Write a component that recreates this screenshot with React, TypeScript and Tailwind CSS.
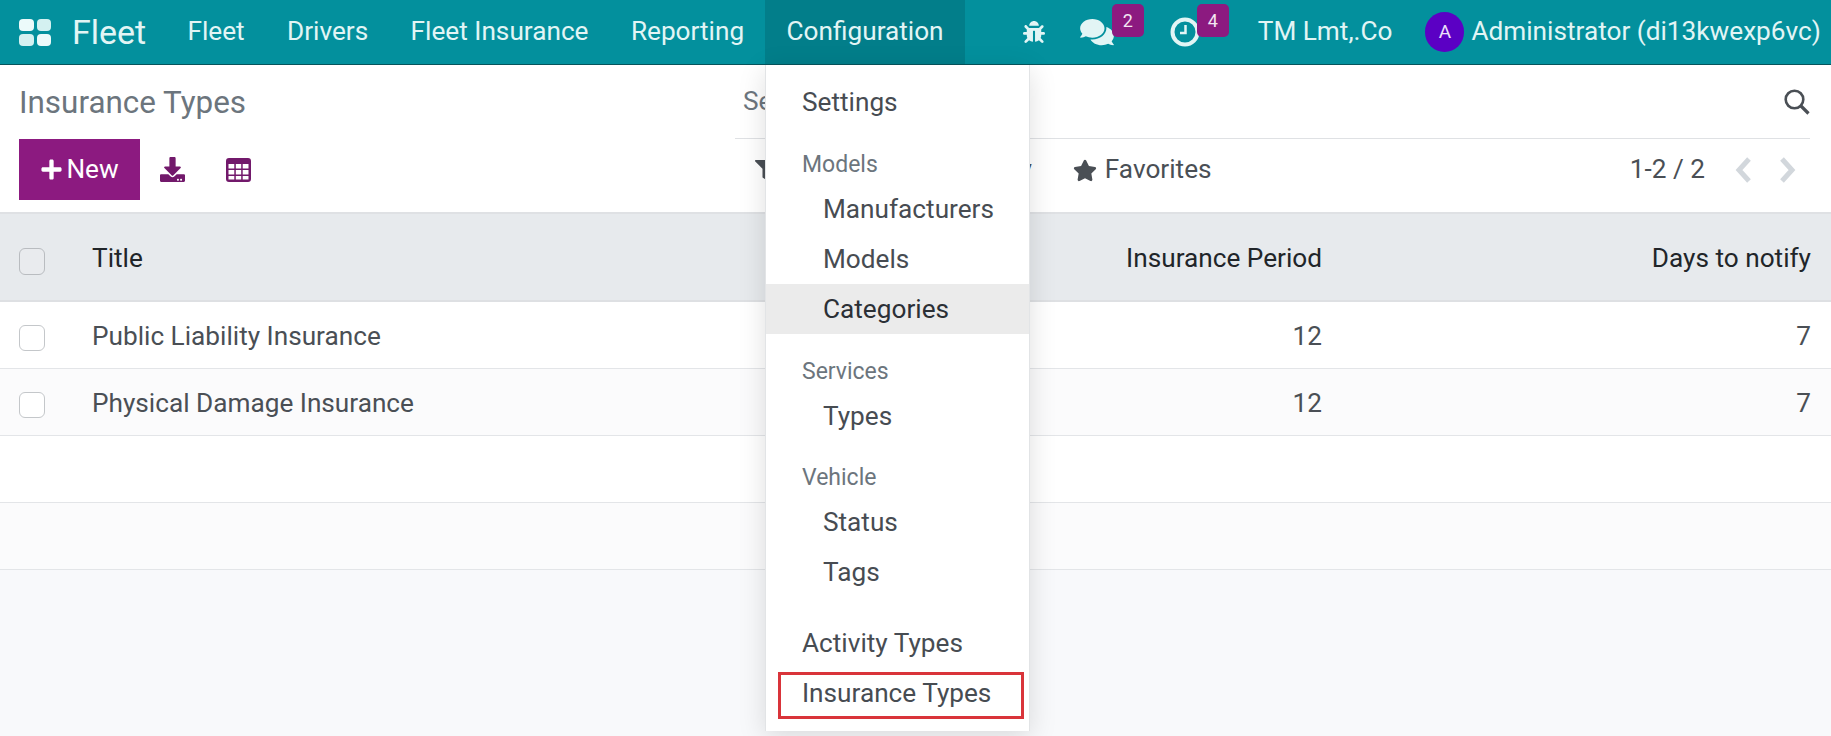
import { FaBug, FaComments, FaDownload, FaFilter, FaPlus, FaStar } from 'react-icons/fa';

const font = { fontFamily: 'Roboto, sans-serif' };

function NavLink({ label, active }: { label: string; active?: boolean }) {
  return (
    <div className={`flex h-full items-center px-[21.2px] text-[26.2px] ${active ? 'bg-[#027e8a]' : ''}`}>{label}</div>
  );
}

function Badge({ value, left }: { value: number; left: string }) {
  return (
    <span className={`absolute top-[4px] flex h-[33px] w-[32px] items-center justify-center rounded-[5px] bg-[#8c1a80] text-[18px] text-[#f3e6f2] ${left}`}>
      {value}
    </span>
  );
}

function MenuItem({ label, nested, active }: { label: string; nested?: boolean; active?: boolean }) {
  return (
    <div
      className={`flex h-[50px] items-center pt-[2px] text-[26.2px] ${nested ? 'pl-[57px]' : 'pl-[36px]'} ${active ? 'bg-[#ebebeb] text-[#2b3036]' : 'text-[#474c52]'}`}
    >
      {label}
    </div>
  );
}

function MenuHeader({ label }: { label: string }) {
  return <div className="mt-[18.7px] flex h-[38px] items-center pt-[1px] pl-[36px] text-[23px] text-[#6c757d]">{label}</div>;
}

function ConfigMenu() {
  return (
    <div className="absolute left-[765px] top-[65px] h-[666px] w-[265px] border-x border-[#e2e4e6] bg-white pt-[12px] shadow-[0_6px_26px_rgba(0,0,0,0.13)]">
      <MenuItem label="Settings" />
      <MenuHeader label="Models" />
      <MenuItem label="Manufacturers" nested />
      <MenuItem label="Models" nested />
      <MenuItem label="Categories" nested active />
      <MenuHeader label="Services" />
      <MenuItem label="Types" nested />
      <MenuHeader label="Vehicle" />
      <MenuItem label="Status" nested />
      <MenuItem label="Tags" nested />
      <div className="h-[21px]" />
      <MenuItem label="Activity Types" />
      <MenuItem label="Insurance Types" />
      <div className="absolute left-[12px] top-[607px] h-[47px] w-[246px] border-[3px] border-[#d9343a]" />
    </div>
  );
}

function Row({ title, period, days, shade }: { title?: string; period?: number; days?: number; shade?: boolean }) {
  return (
    <div className={`flex h-[67px] items-center border-b border-[#e3e5e8] pt-[3px] pr-[20px] text-[26.2px] text-[#4a4f55] ${shade ? 'bg-[#fbfbfc]' : 'bg-white'}`}>
      <div className="flex w-[92px] shrink-0 pl-[19px]">
        {title && <span className="mt-[3px] h-[26px] w-[26px] rounded-[6px] border border-[#c4c7ca] bg-white" />}
      </div>
      <div className="flex-1">{title}</div>
      <div className="w-[300px] text-right">{period}</div>
      <div className="w-[489px] text-right">{days}</div>
    </div>
  );
}

export default function App() {
  return (
    <div className="relative h-[736px] w-[1831px] overflow-hidden bg-[#f8f9fb]" style={font}>
      <nav className="flex h-[65px] items-center border-b border-[#06545c] bg-[#03909d] text-[#e2f5f5]">
        <div className="ml-[19px] grid h-[27px] w-[32px] grid-cols-2 gap-[3px]">
          <span className="rounded-[4px] bg-[#ecfafa]" />
          <span className="rounded-[4px] bg-[#d4f1f1]" />
          <span className="rounded-[4px] bg-[#d4f1f1]" />
          <span className="rounded-[4px] bg-[#ecfafa]" />
        </div>
        <div className="ml-[21px] mr-[20px] text-[34px]">Fleet</div>
        <NavLink label="Fleet" />
        <NavLink label="Drivers" />
        <NavLink label="Fleet Insurance" />
        <NavLink label="Reporting" />
        <NavLink label="Configuration" active />
        <div className="ml-[58px] flex items-center">
          <FaBug className="h-[24px] w-[22px]" />
          <div className="relative ml-[35px] flex h-[64px] w-[34px] items-center">
            <FaComments className="h-[30px] w-[34px]" />
            <Badge value={2} left="left-[32px]" />
          </div>
          <div className="relative ml-[56px] flex h-[64px] w-[30px] items-center">
            <svg viewBox="0 0 30 30" className="h-[30px] w-[30px]" fill="none" stroke="currentColor">
              <circle cx="15" cy="15" r="12.5" strokeWidth="4" />
              <path d="M15.5 8v8H10" strokeWidth="2.5" />
            </svg>
            <Badge value={4} left="left-[27px]" />
          </div>
          <div className="ml-[58px] whitespace-nowrap text-[26.2px]">TM Lmt,.Co</div>
          <div className="ml-[33px] flex h-[40px] w-[39px] items-center justify-center rounded-full bg-[#5b00c4] text-[19px] text-[#ece0fa]">
            A
          </div>
          <div className="ml-[7px] whitespace-nowrap text-[26.2px]">Administrator (di13kwexp6vc)</div>
        </div>
      </nav>

      <div className="flex h-[149px] border-b-2 border-[#dfe1e4] bg-white">
        <div className="w-[735px] shrink-0 pl-[19px]">
          <div className="flex h-[74px] items-center pt-[1px] text-[31.4px] text-[#6c757d]">Insurance Types</div>
          <div className="flex items-center">
            <button className="flex h-[61px] w-[121px] items-center justify-center gap-[3px] bg-[#8c1a80] text-[26.2px] text-white">
              <FaPlus className="h-[23px] w-[23px]" />
              New
            </button>
            <FaDownload className="ml-[20px] h-[25px] w-[25px] text-[#72196b]" />
            <svg viewBox="0 0 25 24" className="ml-[41px] h-[24px] w-[25px] text-[#72196b]" fill="currentColor">
              <path
                fillRule="evenodd"
                d="M3 0h19a3 3 0 0 1 3 3v18a3 3 0 0 1-3 3H3a3 3 0 0 1-3-3V3a3 3 0 0 1 3-3zM2.5 6v4.500h5.800V6H2.500zm7.300 0v4.500h5.400V6H9.800zm6.900 0v4.500h5.800V6h-5.800zM2.500 12v4.500h5.800V12H2.500zm7.300 0v4.500h5.400V12H9.800zm6.900 0v4.500h5.800V12h-5.800zM2.500 18v3.500h5.800V18H2.500zm7.300 0v3.500h5.400V18H9.800zm6.900 0v3.500h5.800V18h-5.800z"
              />
            </svg>
          </div>
        </div>
        <div className="flex-1 pr-[21px]">
          <div className="flex h-[74px] items-center justify-between border-b border-[#dfe1e4] pl-[8px]">
            <span className="text-[26.2px] text-[#6c757d]">Search...</span>
            <svg viewBox="0 0 26 26" className="h-[26px] w-[26px] text-[#4a4f55]" fill="none" stroke="currentColor" strokeWidth="2.6">
              <circle cx="10.500" cy="10.500" r="8.800" />
              <path d="M17 17l7.500 7.500" strokeWidth="3.200" />
            </svg>
          </div>
          <div className="flex h-[73px] items-center pb-[11px] text-[26.2px] text-[#4a4f55]">
            <FaFilter className="ml-[20px] h-[20px] w-[20px]" />
            <span className="ml-[8px]">Filters</span>
            <span className="ml-[71px]">Group By</span>
            <FaStar className="ml-[41px] h-[23px] w-[24px]" />
            <span className="ml-[8px]">Favorites</span>
            <span className="ml-auto">1-2 / 2</span>
            <svg viewBox="0 0 18 26" className="ml-[29px] h-[26px] w-[18px]" fill="none" stroke="#d2d7dc" strokeWidth="5">
              <path d="M15 2 5 13l10 11" />
            </svg>
            <svg viewBox="0 0 18 26" className="ml-[27px] mr-[13px] h-[26px] w-[18px]" fill="none" stroke="#d2d7dc" strokeWidth="5">
              <path d="M3 2l10 11L3 24" />
            </svg>
          </div>
        </div>
      </div>

      <div className="flex h-[88px] items-center border-b-2 border-[#dee0e3] bg-[#e7eaed] pt-[3px] pr-[20px] text-[26.2px] text-[#212529]">
        <div className="flex w-[92px] shrink-0 pl-[19px]">
          <span className="mt-[5px] h-[27px] w-[26px] rounded-[6px] border border-[#b9bcc0] bg-[#e9ebee]" />
        </div>
        <div className="flex-1">Title</div>
        <div className="w-[300px] text-right">Insurance Period</div>
        <div className="w-[489px] text-right">Days to notify</div>
      </div>
      <Row title="Public Liability Insurance" period={12} days={7} />
      <Row title="Physical Damage Insurance" period={12} days={7} shade />
      <Row />
      <Row shade />

      <ConfigMenu />
    </div>
  );
}
